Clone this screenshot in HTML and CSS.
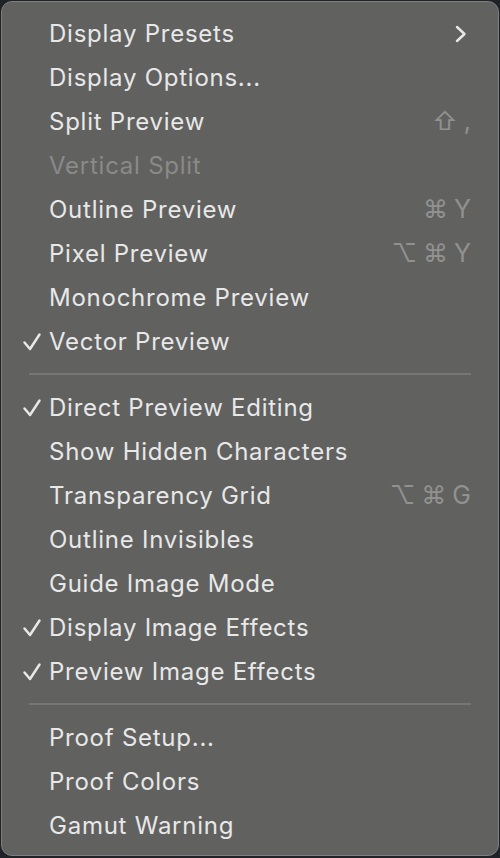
FILE: index.html
```html
<!DOCTYPE html>
<html>
<head>
<meta charset="utf-8">
<link rel="stylesheet" href="styles.css">
</head>
<body>
<div class="menu">
  <div class="item"><span class="label">Display Presets</span>
    <svg class="chev" width="12" height="18" viewBox="0 0 12 18"><path d="M2 2 L9.5 9 L2 16" fill="none" stroke="#e8e8e8" stroke-width="2.4" stroke-linecap="round" stroke-linejoin="round"/></svg>
  </div>
  <div class="item"><span class="label">Display Options...</span></div>
  <div class="item"><span class="label">Split Preview</span><span class="keys"><span>⇧</span><span>,</span></span></div>
  <div class="item disabled"><span class="label">Vertical Split</span></div>
  <div class="item"><span class="label">Outline Preview</span><span class="keys"><span>⌘</span><span>Y</span></span></div>
  <div class="item"><span class="label">Pixel Preview</span><span class="keys"><span>⌥</span><span>⌘</span><span>Y</span></span></div>
  <div class="item"><span class="label">Monochrome Preview</span></div>
  <div class="item checked"><svg class="check" width="20" height="20" viewBox="0 0 20 20"><path d="M2.5 10.5 L8 17 L17.5 2.5" fill="none" stroke="#e8e8e8" stroke-width="2.5" stroke-linecap="round" stroke-linejoin="round"/></svg><span class="label">Vector Preview</span></div>
  <div class="sep"></div>
  <div class="item checked"><svg class="check" width="20" height="20" viewBox="0 0 20 20"><path d="M2.5 10.5 L8 17 L17.5 2.5" fill="none" stroke="#e8e8e8" stroke-width="2.5" stroke-linecap="round" stroke-linejoin="round"/></svg><span class="label">Direct Preview Editing</span></div>
  <div class="item"><span class="label">Show Hidden Characters</span></div>
  <div class="item"><span class="label">Transparency Grid</span><span class="keys"><span>⌥</span><span>⌘</span><span>G</span></span></div>
  <div class="item"><span class="label">Outline Invisibles</span></div>
  <div class="item"><span class="label">Guide Image Mode</span></div>
  <div class="item checked"><svg class="check" width="20" height="20" viewBox="0 0 20 20"><path d="M2.5 10.5 L8 17 L17.5 2.5" fill="none" stroke="#e8e8e8" stroke-width="2.5" stroke-linecap="round" stroke-linejoin="round"/></svg><span class="label">Display Image Effects</span></div>
  <div class="item checked"><svg class="check" width="20" height="20" viewBox="0 0 20 20"><path d="M2.5 10.5 L8 17 L17.5 2.5" fill="none" stroke="#e8e8e8" stroke-width="2.5" stroke-linecap="round" stroke-linejoin="round"/></svg><span class="label">Preview Image Effects</span></div>
  <div class="sep"></div>
  <div class="item"><span class="label">Proof Setup...</span></div>
  <div class="item"><span class="label">Proof Colors</span></div>
  <div class="item"><span class="label">Gamut Warning</span></div>
</div>
</body>
</html>
```

FILE: styles.css
```css
html, body {
  margin: 0;
  padding: 0;
  background: #1f2226;
}
body {
  padding: 1px 1px 0 1px;
  width: 500px;
  height: 858px;
  box-sizing: border-box;
  overflow: hidden;
}
.menu {
  box-sizing: border-box;
  height: 855px;
  background: #616160;
  border: 1px solid #7e7e7e;
  border-radius: 11px;
  padding: 9px 0 8px 0;
  font-family: Inter, "DejaVu Sans", sans-serif;
  font-size: 24px;
  color: #e8e8e8;
}
.item {
  position: relative;
  display: flex;
  align-items: center;
  height: 44px;
  padding: 0 27px 0 47px;
}
.label {
  flex: 1;
  letter-spacing: 0.75px;
}
.disabled .label {
  color: #8a8a89;
}
.check {
  position: absolute;
  left: 20px;
  top: 13px;
}
.chev {
  margin-right: 4px;
  margin-top: 1px;
}
.keys {
  display: flex;
  gap: 6px;
  color: #919190;
  font-size: 25px;
}
.sep {
  height: 2px;
  margin: 10px 27px 10px 27px;
  background: #767675;
}
```
